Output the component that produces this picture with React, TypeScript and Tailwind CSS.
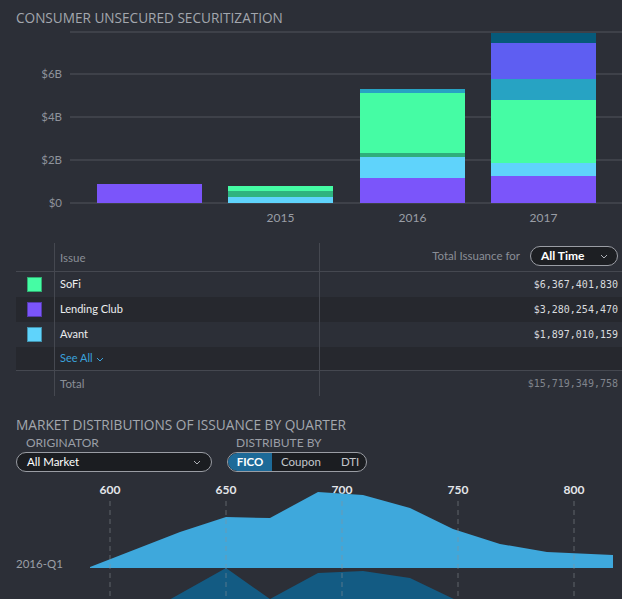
import { ReactElement } from 'react';

type Segment = { from: number; to: number; color: string };
type Bar = { x: number; label?: string; segments: Segment[] };

// y positions are page pixels inside the chart svg (svg top = 28)
const bars: Bar[] = [
  { x: 97, segments: [{ from: 184, to: 203, color: '#7b55fa' }] },
  {
    x: 228,
    label: '2015',
    segments: [
      { from: 197, to: 203, color: '#5fd3fb' },
      { from: 191, to: 197, color: '#2fb37f' },
      { from: 186, to: 191, color: '#45fca4' },
    ],
  },
  {
    x: 360,
    label: '2016',
    segments: [
      { from: 178, to: 203, color: '#7b55fa' },
      { from: 157, to: 178, color: '#5fd3fb' },
      { from: 153, to: 157, color: '#2fae7c' },
      { from: 93, to: 153, color: '#45fca4' },
      { from: 89, to: 93, color: '#27a3c3' },
    ],
  },
  {
    x: 491,
    label: '2017',
    segments: [
      { from: 176, to: 203, color: '#7b55fa' },
      { from: 163, to: 176, color: '#5fd3fb' },
      { from: 100, to: 163, color: '#45fca4' },
      { from: 79, to: 100, color: '#27a3c3' },
      { from: 43, to: 79, color: '#5e5ef2' },
      { from: 33, to: 43, color: '#065a7a' },
    ],
  },
];

const gridLines = [
  { y: 32, label: '' },
  { y: 74, label: '$6B' },
  { y: 117, label: '$4B' },
  { y: 160, label: '$2B' },
  { y: 203, label: '$0' },
];

const rows = [
  { name: 'SoFi', color: 'bg-[#45fca4]', value: '$6,367,401,830', dark: false },
  { name: 'Lending Club', color: 'bg-[#7b55fa]', value: '$3,280,254,470', dark: true },
  { name: 'Avant', color: 'bg-[#5fd3fb]', value: '$1,897,010,159', dark: false },
];

const ficoTicks = [
  { x: 110, label: '600' },
  { x: 226, label: '650' },
  { x: 342, label: '700' },
  { x: 458, label: '750' },
  { x: 574, label: '800' },
];

const mono = { fontFamily: '"DejaVu Sans Mono", monospace' };

function Chevron({ className }: { className?: string }) {
  return (
    <svg width="8" height="5" viewBox="0 0 8 5" className={className}>
      <path d="M1 1l3 3 3-3" fill="none" stroke="currentColor" strokeWidth="1" />
    </svg>
  );
}

function BarChart() {
  return (
    <svg width="622" height="200" className="block">
      <g transform="translate(0,-28)">
        {gridLines.map((g) => (
          <g key={g.y}>
            <line x1="70" x2="622" y1={g.y} y2={g.y} stroke="#454850" strokeWidth="1.5" />
            {g.label && (
              <text x="62" y={g.y + 4} textAnchor="end" fontSize="11.5" fill="#8e929b">
                {g.label}
              </text>
            )}
          </g>
        ))}
        {bars.map((b) => (
          <g key={b.x}>
            {b.segments.map((s) => (
              <rect key={s.from} x={b.x} y={s.from} width="105" height={s.to - s.from} fill={s.color} />
            ))}
            {b.label && (
              <text x={b.x + 52.5} y="222" textAnchor="middle" fontSize="12" fill="#9a9ea6">
                {b.label}
              </text>
            )}
          </g>
        ))}
      </g>
    </svg>
  );
}

function AreaChart() {
  const top =
    'M90 567 L180 532 L226 517 L270 518 L318 492 L363 495 L410 508 L453 529 L500 544 L547 552 L613 555 L613 568 L90 568 Z';
  const second =
    'M160 605 L226 568 L270 599 L318 573 L363 571 L410 578 L460 602 L460 610 L160 610 Z';
  return (
    <svg width="622" height="121" className="block">
      <g transform="translate(0,-478)">
        {ficoTicks.map((t) => (
          <text key={t.x} x={t.x} y="494" textAnchor="middle" fontSize="12" fontWeight="700" fill="#e4e6ea">
            {t.label}
          </text>
        ))}
        <path d={top} fill="#3ea8dc" />
        <path d={second} fill="#135b83" />
        {ficoTicks.map((t) => (
          <line
            key={t.x}
            x1={t.x}
            x2={t.x}
            y1="501"
            y2="600"
            stroke="#8a8e96"
            strokeOpacity="0.55"
            strokeDasharray="5 4"
          />
        ))}
        <text x="16" y="568" fontSize="11.5" fill="#9a9ea6">
          2016-Q1
        </text>
      </g>
    </svg>
  );
}

function App(): ReactElement {
  return (
    <div
      className="w-[622px] h-[599px] overflow-hidden bg-[#2c2f37] text-[#e6e7ea]"
      style={{ fontFamily: 'Lato, "Open Sans", sans-serif' }}
    >
      <div
        className="h-[28px] pl-4 pt-[8px] text-[13.6px] leading-[20px] text-[#a3a7ae]"
        style={{ fontFamily: '"Open Sans", sans-serif' }}
      >
        CONSUMER UNSECURED SECURITIZATION
      </div>
      <BarChart />

      {/* issuance table */}
      <div className="mt-[15px] ml-4 text-[11.5px]">
        <div className="flex h-[29px] border-b border-[#454850]">
          <div className="w-[39px] border-r border-[#454850]" />
          <div className="w-[265px] border-r border-[#454850] pl-[5px] pt-[6px] text-[#8a8e96]">Issue</div>
          <div className="flex flex-1 items-center justify-end pr-1 pb-[2px]">
            <span className="mr-[10px] text-[#8a8e96]">Total Issuance for</span>
            <div className="flex h-[20px] w-[88px] items-center justify-between rounded-full border border-[#9a9da4] bg-[#1d1f23] pl-[10px] pr-[9px] text-[12px] font-bold text-white">
              All Time
              <Chevron className="text-[#aeb1b7]" />
            </div>
          </div>
        </div>
        {rows.map((r) => (
          <div key={r.name} className={`flex h-[25px] ${r.dark ? 'bg-[#26282e]' : ''}`}>
            <div className="flex w-[39px] items-center border-r border-[#454850] pl-[11px]">
              <div className={`h-[15px] w-[15px] border border-black/30 ${r.color}`} />
            </div>
            <div className="flex w-[265px] items-center border-r border-[#454850] pl-[5px] text-[11px] text-[#eceef0]">
              {r.name}
            </div>
            <div className="flex flex-1 items-center justify-end pr-1 text-[10px] text-[#d9dbde]" style={mono}>
              {r.value}
            </div>
          </div>
        ))}
        <div className="flex h-[24px] border-b border-[#454850] bg-[#26282e]">
          <div className="w-[39px] border-r border-[#454850]" />
          <div className="flex w-[265px] items-center gap-[3px] border-r border-[#454850] pl-[5px] text-[11px] text-[#3aa2dc]">
            See All
            <Chevron className="mt-[2px]" />
          </div>
          <div className="flex-1" />
        </div>
        <div className="flex h-[25px]">
          <div className="w-[39px] border-r border-[#454850]" />
          <div className="flex w-[265px] items-center border-r border-[#454850] pl-[5px] text-[#8a8e96]">Total</div>
          <div className="flex flex-1 items-center justify-end pr-1 text-[10px] text-[#80848c]" style={mono}>
            $15,719,349,758
          </div>
        </div>
      </div>

      {/* distributions */}
      <div
        className="mt-[19px] pl-4 text-[13.7px] leading-[20px] text-[#a3a7ae]"
        style={{ fontFamily: '"Open Sans", sans-serif' }}
      >
        MARKET DISTRIBUTIONS OF ISSUANCE BY QUARTER
      </div>
      <div className="mt-[1px] flex gap-[15px] pl-4">
        <div className="w-[196px]">
          <div className="pl-[10px] text-[12px] leading-[14px] text-[#9a9ea6]">ORIGINATOR</div>
          <div className="mt-[2px] flex h-[20px] items-center justify-between rounded-full border border-[#9a9da4] bg-[#1b1d21] pl-[10px] pr-[10px] text-[11.5px] text-white">
            All Market
            <Chevron className="text-[#aeb1b7]" />
          </div>
        </div>
        <div>
          <div className="pl-[9px] text-[12px] leading-[14px] text-[#9a9ea6]">DISTRIBUTE BY</div>
          <div className="mt-[2px] flex h-[20px] w-[140px] items-center overflow-hidden rounded-full border border-[#9a9da4] bg-[#1b1d21] text-[11.5px]">
            <div className="flex h-full w-[44px] items-center justify-center rounded-l-full bg-[#1d6a98] font-bold text-white">FICO</div>
            <div className="ml-[9px] text-[#c4c7cc]">Coupon</div>
            <div className="ml-[20px] text-[#c4c7cc]">DTI</div>
          </div>
        </div>
      </div>
      <div className="mt-[6px]">
        <AreaChart />
      </div>
    </div>
  );
}

export default App;
